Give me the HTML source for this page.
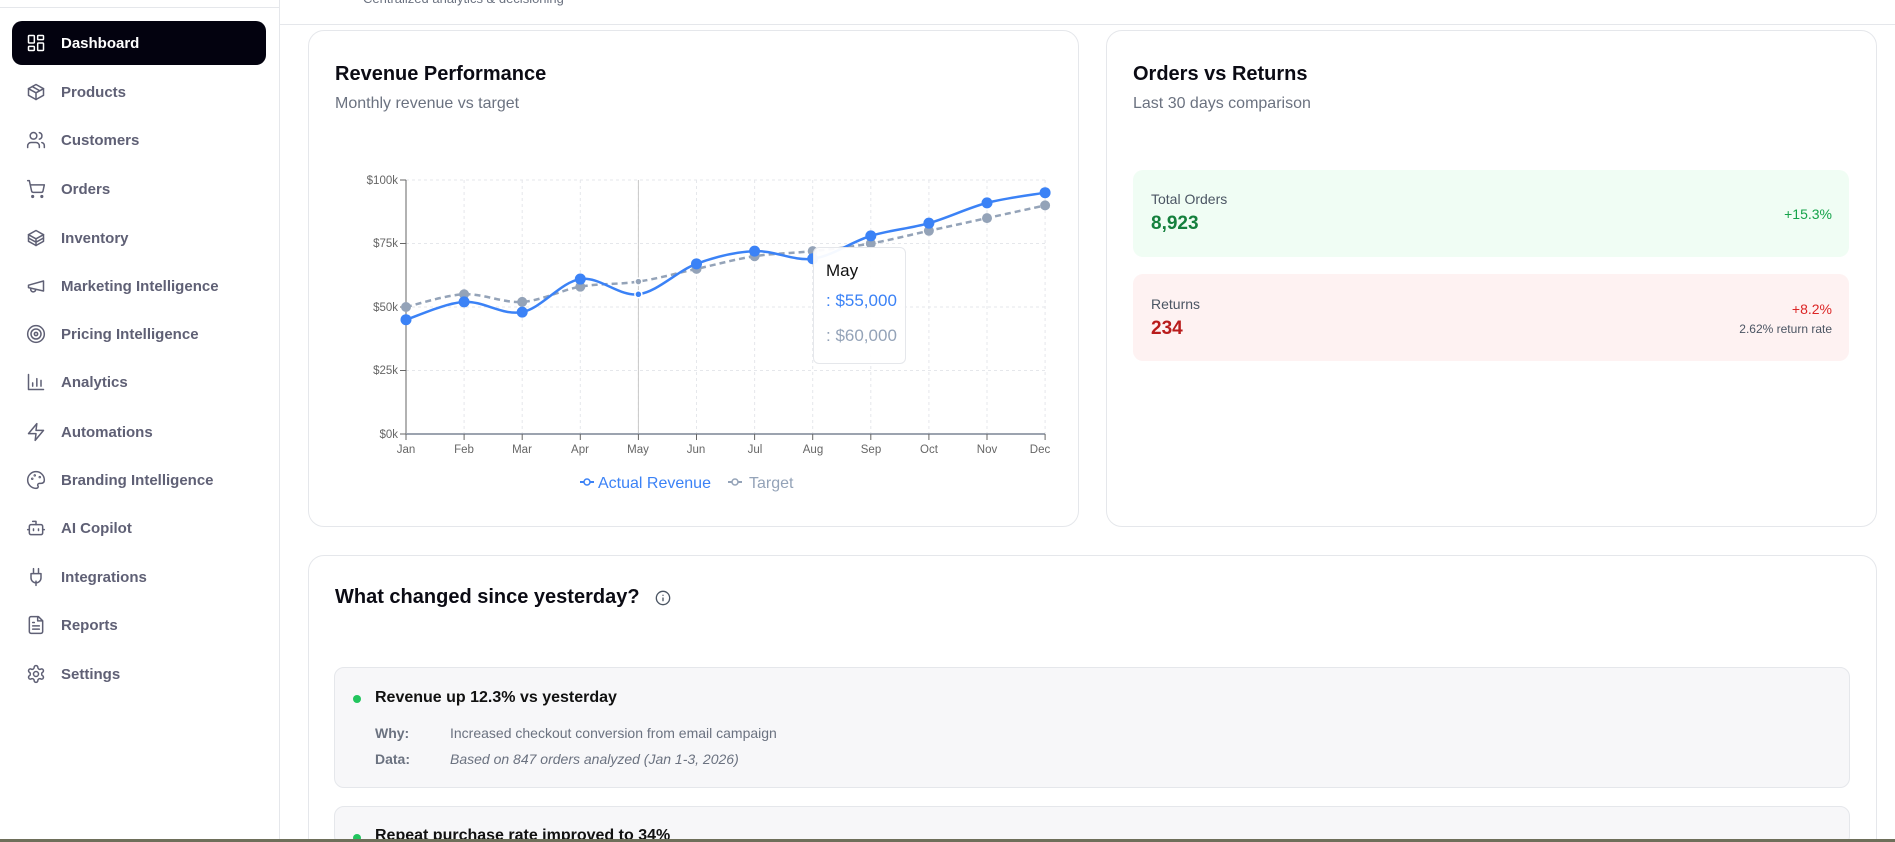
<!DOCTYPE html>
<html style="overflow:hidden;height:842px"><head><meta charset="utf-8"><style>
*{box-sizing:border-box;margin:0;padding:0}
html,body{overflow:hidden}
body{width:1895px;height:842px;background:#fff;font-family:"Liberation Sans",sans-serif;position:relative}
.sb{position:absolute;left:0;top:0;width:280px;height:842px;border-right:1px solid #e5e7eb;background:#fff}
.sb .topline{position:absolute;left:0;top:7px;width:280px;border-top:1px solid #e5e7eb}
.nav{position:absolute;left:12px;width:254px;height:44px;display:flex;align-items:center;padding-left:14px;font-size:15px;font-weight:bold;color:#5f6075;border-radius:10px}
.nav svg{width:20px;height:20px;margin-right:15px;fill:none;stroke:#5f6075;stroke-width:1.8;stroke-linecap:round;stroke-linejoin:round}
.nav.act{background:#03020f;color:#fff}
.nav.act svg{stroke:#fff}
.hdr{position:absolute;left:280px;top:0;right:0;height:25px;border-bottom:1px solid #e5e7eb}
.hdr span{position:absolute;left:83px;top:-9px;font-size:13px;color:#6b7280}
.card{position:absolute;border:1px solid #e5e7eb;border-radius:16px;background:#fff}
.ttl{position:absolute;font-size:20px;font-weight:bold;color:#0b0b14}
.sub{position:absolute;font-size:16px;color:#6b7280}
.box{position:absolute;border-radius:10px}
.abs{position:absolute;white-space:nowrap}
</style></head><body>
<div class="sb"><div class="topline"></div>
<div class="nav act" style="top:21px"><svg viewBox="0 0 24 24"><rect x="3" y="3" width="7" height="9" rx="1"/><rect x="14" y="3" width="7" height="5" rx="1"/><rect x="14" y="12" width="7" height="9" rx="1"/><rect x="3" y="16" width="7" height="5" rx="1"/></svg>Dashboard</div>
<div class="nav" style="top:70px"><svg viewBox="0 0 24 24"><path d="M21 8l-9-5-9 5v8l9 5 9-5z"/><path d="M3 8l9 5 9-5M12 13v8M7.5 5.5l9 5"/></svg>Products</div>
<div class="nav" style="top:118px"><svg viewBox="0 0 24 24"><circle cx="9" cy="7" r="4"/><path d="M2 21v-2a4 4 0 0 1 4-4h6a4 4 0 0 1 4 4v2M16 3.1a4 4 0 0 1 0 7.8M22 21v-2a4 4 0 0 0-3-3.9"/></svg>Customers</div>
<div class="nav" style="top:167px"><svg viewBox="0 0 24 24"><circle cx="8" cy="21" r="1"/><circle cx="19" cy="21" r="1"/><path d="M2 2h2l2.7 12.4a2 2 0 0 0 2 1.6h9.7a2 2 0 0 0 2-1.6L22 7H5"/></svg>Orders</div>
<div class="nav" style="top:216px"><svg viewBox="0 0 24 24"><path d="M21 8l-9-5-9 5v8l9 5 9-5z"/><path d="M3 8l9 5 9-5M12 13v8M3 12l9 5 9-5"/></svg>Inventory</div>
<div class="nav" style="top:264px"><svg viewBox="0 0 24 24"><path d="M3 11l18-5v12L3 14z"/><path d="M11.6 16.8a3 3 0 1 1-5.8-1.6"/></svg>Marketing Intelligence</div>
<div class="nav" style="top:312px"><svg viewBox="0 0 24 24"><circle cx="12" cy="12" r="10"/><circle cx="12" cy="12" r="6"/><circle cx="12" cy="12" r="2"/></svg>Pricing Intelligence</div>
<div class="nav" style="top:360px"><svg viewBox="0 0 24 24"><path d="M3 3v18h18M8 17v-4M13 17V8M18 17v-7"/></svg>Analytics</div>
<div class="nav" style="top:410px"><svg viewBox="0 0 24 24"><path d="M13 2L3 14h9l-1 8 10-12h-9z"/></svg>Automations</div>
<div class="nav" style="top:458px"><svg viewBox="0 0 24 24"><path d="M12 22a10 10 0 1 1 10-10c0 3-2 4-4 4h-2a2 2 0 0 0-1.5 3.3c.5.6.2 2.7-2.5 2.7z"/><circle cx="7.5" cy="10.5" r=".6"/><circle cx="10.5" cy="6.5" r=".6"/><circle cx="16.5" cy="8.5" r=".6"/></svg>Branding Intelligence</div>
<div class="nav" style="top:506px"><svg viewBox="0 0 24 24"><path d="M12 8V4H8"/><rect x="4" y="8" width="16" height="12" rx="2"/><path d="M2 14h2M20 14h2M15 13v2M9 13v2"/></svg>AI Copilot</div>
<div class="nav" style="top:555px"><svg viewBox="0 0 24 24"><path d="M12 22v-5M9 8V2M15 8V2M18 8v5a6 6 0 0 1-12 0V8z"/></svg>Integrations</div>
<div class="nav" style="top:603px"><svg viewBox="0 0 24 24"><path d="M15 2H6a2 2 0 0 0-2 2v16a2 2 0 0 0 2 2h12a2 2 0 0 0 2-2V7z"/><path d="M14 2v5h5M16 13H8M16 17H8M10 9H8"/></svg>Reports</div>
<div class="nav" style="top:652px"><svg viewBox="0 0 24 24"><path d="M12.2 2h-.4a2 2 0 0 0-2 2v.2a2 2 0 0 1-1 1.7l-.4.3a2 2 0 0 1-2 0l-.2-.1a2 2 0 0 0-2.7.7l-.2.4a2 2 0 0 0 .7 2.7l.2.1a2 2 0 0 1 1 1.7v.5a2 2 0 0 1-1 1.8l-.2.1a2 2 0 0 0-.7 2.7l.2.4a2 2 0 0 0 2.7.7l.2-.1a2 2 0 0 1 2 0l.4.3a2 2 0 0 1 1 1.7v.2a2 2 0 0 0 2 2h.4a2 2 0 0 0 2-2v-.2a2 2 0 0 1 1-1.7l.4-.3a2 2 0 0 1 2 0l.2.1a2 2 0 0 0 2.7-.7l.2-.4a2 2 0 0 0-.7-2.7l-.2-.1a2 2 0 0 1-1-1.8v-.5a2 2 0 0 1 1-1.7l.2-.1a2 2 0 0 0 .7-2.7l-.2-.4a2 2 0 0 0-2.7-.7l-.2.1a2 2 0 0 1-2 0l-.4-.3a2 2 0 0 1-1-1.7V4a2 2 0 0 0-2-2z"/><circle cx="12" cy="12" r="3"/></svg>Settings</div>
</div>

<div class="hdr"><span>Centralized analytics &amp; decisioning</span></div>

<div class="card" style="left:308px;top:30px;width:771px;height:497px"></div>
<div class="ttl" style="left:335px;top:63px">Revenue Performance</div>
<div class="sub" style="left:335px;top:95px">Monthly revenue vs target</div>

<svg style="position:absolute;left:0;top:0" width="1895" height="842" id="ch">
<g stroke="#e5e7eb" stroke-dasharray="3 3" fill="none" id="grid"></g>
<line x1="638.4" y1="180" x2="638.4" y2="434" stroke="#c8c8c8" stroke-width="1"/>
<line x1="406" y1="180" x2="406" y2="434" stroke="#666" stroke-width="1"/>
<line x1="406" y1="434" x2="1045" y2="434" stroke="#9ca3af" stroke-width="2"/>
<g id="ticks" stroke="#666"></g>
<g font-family="Liberation Sans,sans-serif" font-size="11.5" fill="#666" text-anchor="end">
<text x="398" y="184">$100k</text><text x="398" y="247">$75k</text><text x="398" y="311">$50k</text><text x="398" y="374">$25k</text><text x="398" y="438">$0k</text>
</g>
<g font-family="Liberation Sans,sans-serif" font-size="11.5" fill="#666" text-anchor="middle">
<text x="406" y="453">Jan</text><text x="464" y="453">Feb</text><text x="522" y="453">Mar</text><text x="580" y="453">Apr</text><text x="638" y="453">May</text><text x="696" y="453">Jun</text><text x="755" y="453">Jul</text><text x="813" y="453">Aug</text><text x="871" y="453">Sep</text><text x="929" y="453">Oct</text><text x="987" y="453">Nov</text><text x="1040" y="453">Dec</text>
</g>
<path id="pt" fill="none" stroke="#94a3b8" stroke-width="2.5" stroke-dasharray="6 4"/>
<path id="pa" fill="none" stroke="#3b82f6" stroke-width="2.5"/>
<g id="dots"></g>
<g font-family="Liberation Sans,sans-serif" font-size="16">
<line x1="580" y1="482" x2="594" y2="482" stroke="#3b82f6" stroke-width="2"/><circle cx="587" cy="482" r="3" fill="#fff" stroke="#3b82f6" stroke-width="1.5"/>
<text x="598" y="488" fill="#3b82f6">Actual Revenue</text>
<line x1="728" y1="482" x2="742" y2="482" stroke="#94a3b8" stroke-width="2"/><circle cx="735" cy="482" r="3" fill="#fff" stroke="#94a3b8" stroke-width="1.5"/>
<text x="749" y="488" fill="#94a3b8">Target</text>
</g>
</svg>

<div class="abs" style="left:813px;top:247px;width:93px;height:117px;background:rgba(255,255,255,.95);border:1px solid #e5e7eb;border-radius:6px"></div>
<div class="abs" style="left:826px;top:261px;font-size:17px;color:#111">May</div>
<div class="abs" style="left:826px;top:291px;font-size:17px;color:#3b82f6">: $55,000</div>
<div class="abs" style="left:826px;top:326px;font-size:17px;color:#94a3b8">: $60,000</div>

<div class="card" style="left:1106px;top:30px;width:771px;height:497px"></div>
<div class="ttl" style="left:1133px;top:63px">Orders vs Returns</div>
<div class="sub" style="left:1133px;top:95px">Last 30 days comparison</div>
<div class="box" style="left:1133px;top:170px;width:716px;height:87px;background:#f0fdf4"></div>
<div class="abs" style="left:1151px;top:191px;font-size:14px;color:#4b5563">Total Orders</div>
<div class="abs" style="left:1151px;top:213px;font-size:19px;font-weight:bold;color:#15803d">8,923</div>
<div class="abs" style="right:63px;top:206px;font-size:14px;color:#16a34a">+15.3%</div>
<div class="box" style="left:1133px;top:274px;width:716px;height:87px;background:#fef2f2"></div>
<div class="abs" style="left:1151px;top:296px;font-size:14px;color:#4b5563">Returns</div>
<div class="abs" style="left:1151px;top:318px;font-size:19px;font-weight:bold;color:#b91c1c">234</div>
<div class="abs" style="right:63px;top:301px;font-size:14px;color:#dc2626">+8.2%</div>
<div class="abs" style="right:63px;top:322px;font-size:12px;color:#4b5563">2.62% return rate</div>

<div class="card" style="left:308px;top:555px;width:1569px;height:300px"></div>
<div class="ttl" style="left:335px;top:586px">What changed since yesterday?</div>
<svg class="abs" style="left:655px;top:590px" width="16" height="16" viewBox="0 0 24 24" fill="none" stroke="#4b5563" stroke-width="2" stroke-linecap="round"><circle cx="12" cy="12" r="10"/><path d="M12 16v-4M12 8h.01"/></svg>
<div class="box" style="left:334px;top:667px;width:1516px;height:121px;background:#f7f7f9;border:1px solid #e5e7eb"></div>
<div class="abs" style="left:353px;top:695px;width:8px;height:8px;border-radius:50%;background:#22c55e"></div>
<div class="abs" style="left:375px;top:689px;font-size:16px;font-weight:bold;color:#111">Revenue up 12.3% vs yesterday</div>
<div class="abs" style="left:375px;top:725px;font-size:14px;color:#6b7280;font-weight:bold">Why:</div>
<div class="abs" style="left:450px;top:725px;font-size:14px;color:#6b7280">Increased checkout conversion from email campaign</div>
<div class="abs" style="left:375px;top:751px;font-size:14px;color:#6b7280;font-weight:bold">Data:</div>
<div class="abs" style="left:450px;top:751px;font-size:14px;color:#6b7280;font-style:italic">Based on 847 orders analyzed (Jan 1-3, 2026)</div>
<div class="box" style="left:334px;top:806px;width:1516px;height:40px;background:#f7f7f9;border:1px solid #e5e7eb"></div>
<div class="abs" style="left:353px;top:834px;width:8px;height:8px;border-radius:50%;background:#22c55e"></div>
<div class="abs" style="left:375px;top:827px;font-size:16px;font-weight:bold;color:#111">Repeat purchase rate improved to 34%</div>

<div class="abs" style="left:0;top:839px;width:1895px;height:3px;background:#6e6f5a"></div>

<script>
var X=[],A=[45,52,48,61,55,67,72,69,78,83,91,95],T=[50,55,52,58,60,65,70,72,75,80,85,90];
for(var i=0;i<12;i++)X.push(406+58.1*i);
function Y(v){return 434-v*2.54}
function path(V){var p=X.map(function(x,i){return[x,Y(V[i])]});var d="M"+p[0][0]+","+p[0][1];
for(var i=0;i<11;i++){var p0=p[Math.max(i-1,0)],p1=p[i],p2=p[i+1],p3=p[Math.min(i+2,11)];
d+=" C"+(p1[0]+(p2[0]-p0[0])/6)+","+(p1[1]+(p2[1]-p0[1])/6)+" "+(p2[0]-(p3[0]-p1[0])/6)+","+(p2[1]-(p3[1]-p1[1])/6)+" "+p2[0]+","+p2[1];}return d}
document.getElementById('pa').setAttribute('d',path(A));
document.getElementById('pt').setAttribute('d',path(T));
var ns="http://www.w3.org/2000/svg",g=document.getElementById('dots'),gr=document.getElementById('grid'),tk=document.getElementById('ticks');
function el(p,t,a){var e=document.createElementNS(ns,t);for(var k in a)e.setAttribute(k,a[k]);p.appendChild(e);return e}
[180,243.5,307,370.5].forEach(function(y){el(gr,'line',{x1:406,x2:1045,y1:y,y2:y});el(tk,'line',{x1:400,x2:406,y1:y,y2:y})});
el(tk,'line',{x1:400,x2:406,y1:434,y2:434});
X.forEach(function(x,i){if(i>0)el(gr,'line',{x1:x,x2:x,y1:180,y2:434});el(tk,'line',{x1:x,x2:x,y1:434,y2:440});
if(i==4){el(g,'circle',{cx:x,cy:Y(T[i]),r:3.5,fill:'#94a3b8',stroke:'#fff','stroke-width':1.5});el(g,'circle',{cx:x,cy:Y(A[i]),r:3.5,fill:'#3b82f6',stroke:'#fff','stroke-width':1.5});}
else{el(g,'circle',{cx:x,cy:Y(T[i]),r:5,fill:'#94a3b8'});el(g,'circle',{cx:x,cy:Y(A[i]),r:5.5,fill:'#3b82f6'});}});
</script>
</body></html>
